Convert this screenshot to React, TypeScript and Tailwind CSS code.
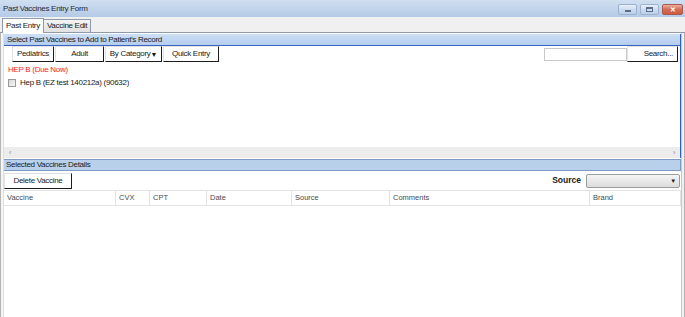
import React from 'react';

const cols = [
  { name: 'Vaccine', w: 'w-[112px]' },
  { name: 'CVX', w: 'w-[34px]' },
  { name: 'CPT', w: 'w-[57px]' },
  { name: 'Date', w: 'w-[85px]' },
  { name: 'Source', w: 'w-[98px]' },
  { name: 'Comments', w: 'w-[200px]' },
  { name: 'Brand', w: 'flex-1' },
];

function WinButton({ kind }: { kind: 'min' | 'max' | 'close' }) {
  const base = 'h-[11px] rounded-[2px] border flex items-center justify-center';
  if (kind === 'close') {
    return (
      <div className={`${base} w-[21px] border-[#a65a50] bg-gradient-to-b from-[#eab0a0] via-[#d66a52] to-[#cf5a40]`}>
        <span className="text-white text-[7px] font-bold leading-none">✕</span>
      </div>
    );
  }
  return (
    <div className={`${base} w-[19px] border-[#9cb2cf] bg-gradient-to-b from-[#e9f0fa] via-[#cddcef] to-[#bacfe8]`}>
      {kind === 'min' ? (
        <div className="w-[6px] h-[2px] bg-[#5a6d88] mt-[3px]" />
      ) : (
        <div className="w-[7px] h-[5px] border border-[#5a6d88] border-t-2" />
      )}
    </div>
  );
}

function Btn({ children, className = '' }: { children: React.ReactNode; className?: string }) {
  return (
    <div
      className={`h-[16px] flex items-center justify-center whitespace-nowrap bg-white border border-t-[#e3e3e3] border-l-[#e3e3e3] border-r-[#1c1c1c] border-b-[#1c1c1c] text-[#1a1a1a] ${className}`}
    >
      {children}
    </div>
  );
}

export default function App() {
  return (
    <div className="w-[685px] h-[317px] overflow-hidden bg-[#f0f0f0] flex flex-col font-['Liberation_Sans',Arial,sans-serif] text-[8px] tracking-[-0.3px] text-[#1a1a1a] leading-none">
      {/* title bar */}
      <div className="h-[17px] flex items-center justify-between pl-[3px] pr-[2px] bg-gradient-to-b from-[#d0dff1] to-[#b4cae6]">
        <span className="text-[8px] text-[#1e2a3a] mt-[1px]">Past Vaccines Entry Form</span>
        <div className="flex gap-[3px] items-center mt-[2px]">
          <WinButton kind="min" />
          <WinButton kind="max" />
          <WinButton kind="close" />
        </div>
      </div>

      {/* tabs */}
      <div className="h-[16px] flex items-end pl-[2px] border-b border-[#8e9bad]">
        <div className="h-[15px] px-[3px] flex items-center bg-white border border-b-0 border-[#8e9bad] relative top-[1px]">Past Entry</div>
        <div className="h-[13px] px-[3px] flex items-center bg-gradient-to-b from-[#f4f4f4] to-[#e1e1e1] border border-b-0 border-l-0 border-[#8e9bad]">Vaccine Edit</div>
      </div>

      {/* body */}
      <div className="flex-1 flex bg-white">
        <div className="w-[4px] border-l border-[#b5b5b5] bg-[#f5f5f5] border-r border-r-[#d6e1ef]" />
        <div className="flex-1 flex flex-col">
          {/* upper group */}
          <div className="h-[124px] mt-[1px] flex flex-col border-r border-[#2f5fbf]">
            <div className="h-[12px] flex items-center pl-[3px] bg-gradient-to-b from-[#cddff5] to-[#b3cdee] border-b border-[#3a66c0]">
              Select Past Vaccines to Add to Patient's Record
            </div>
            <div className="flex items-center justify-between pl-[8px] pr-[2px]">
              <div className="flex gap-[1px]">
                <Btn className="w-[42px]">Pediatrics</Btn>
                <Btn className="w-[49px]">Adult</Btn>
                <Btn className="w-[57px] justify-between px-[3px]">
                  <span>By Category</span>
                  <span className="text-[7px]">▼</span>
                </Btn>
                <Btn className="w-[56px]">Quick Entry</Btn>
              </div>
              <div className="flex items-center">
                <div className="w-[83px] h-[13px] border border-[#c8c8c8] bg-white" />
                <Btn className="w-[51px] justify-end pr-[4px]">Search...</Btn>
              </div>
            </div>
            <div className="flex-1 flex flex-col pl-[4px] pt-[4px] gap-[5px]">
              <div className="text-[#ff1a1a]">HEP B (Due Now)</div>
              <div className="flex items-center gap-[4px]">
                <div className="w-[8px] h-[8px] border border-[#9a9a9a] bg-gradient-to-br from-[#d8d8d8] to-[#f6f6f6]" />
                <span>Hep B (EZ test 140212a) (90632)</span>
              </div>
            </div>
            <div className="h-[11px] bg-[#ececec] flex items-center justify-between px-[5px] text-[#8a8a8a] text-[7px]">
              <span>‹</span>
              <span>›</span>
            </div>
          </div>

          {/* lower group */}
          <div className="h-[12px] mt-[1px] flex items-center pl-[2px] bg-[#b9d0ea] border-t border-b border-[#7d9ac3] border-r">
            Selected Vaccines Details
          </div>
          <div className="h-[19px] flex items-center justify-between pr-[1px]">
            <Btn className="w-[68px] h-[16px]">Delete Vaccine</Btn>
            <div className="flex items-center gap-[5px]">
              <span className="font-bold text-[8.5px] tracking-normal">Source</span>
              <div className="w-[94px] h-[14px] border border-[#9c9c9c] rounded-[2px] bg-gradient-to-b from-[#f5f5f5] to-[#dcdcdc] flex items-center justify-end pr-[3px]">
                <span className="text-[6px]">▼</span>
              </div>
            </div>
          </div>
          <div className="h-[16px] flex border-t border-b border-[#e2e2e2] text-[#4a4a4a] text-[7.5px] tracking-normal">
            {cols.map((c) => (
              <div key={c.name} className={`${c.w} flex items-center pl-[3px] border-r border-[#e2e2e2]`}>
                {c.name}
              </div>
            ))}
          </div>
          <div className="flex-1" />
        </div>
        <div className="w-[4px] border-l border-[#c8c8c8] bg-[#f0f0f0] border-r border-r-[#b0b0b0]" />
      </div>
    </div>
  );
}
